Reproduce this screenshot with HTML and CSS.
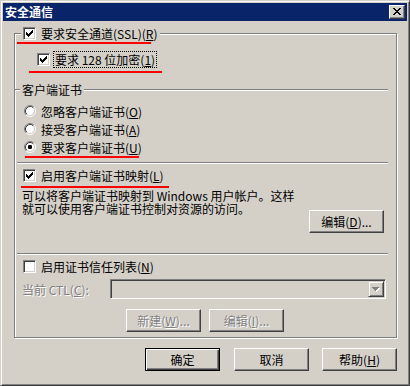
FILE: index.html
```
<!DOCTYPE html>
<html>
<head>
    <meta charset="UTF-8">
    <title>安全通信</title>
    <link rel="stylesheet" href="styles.css">
</head>
<body>

<div class="window">
    <div class="titlebar">
        <span class="title">安全通信</span>
        <span class="close-btn">
            <svg width="8" height="7" viewBox="0 0 8 7" shape-rendering="crispEdges"><path d="M0 0h2v1H0z M6 0h2v1H6z M1 1h2v1H1z M5 1h2v1H5z M2 2h4v1H2z M3 3h2v1H3z M2 4h4v1H2z M1 5h2v1H1z M5 5h2v1H5z M0 6h2v1H0z M6 6h2v1H6z" fill="#000"/></svg>
        </span>
    </div>

    <div class="dialog-body">
        <div class="group">
            <div class="legend">
                <span class="cb checked"></span>
                <span class="label">要求安全通道(SSL)(<u>R</u>)</span>
            </div>

            <div class="row row-128">
                <span class="cb checked"></span>
                <span class="label focus">要求 128 位加密(<u>1</u>)</span>
            </div>

            <div class="sep sep-titled"><span class="sep-label">客户端证书</span></div>

            <div class="radios">
                <div class="radio-row"><span class="radio"></span><span class="label">忽略客户端证书(<u>O</u>)</span></div>
                <div class="radio-row"><span class="radio"></span><span class="label">接受客户端证书(<u>A</u>)</span></div>
                <div class="radio-row"><span class="radio selected"></span><span class="label">要求客户端证书(<u>U</u>)</span></div>
            </div>

            <div class="sep"></div>

            <div class="row row-check">
                <span class="cb checked"></span>
                <span class="label">启用客户端证书映射(<u>L</u>)</span>
            </div>

            <div class="mapping">
                <p class="note">可以将客户端证书映射到 Windows 用户帐户。这样<br>就可以使用客户端证书控制对资源的访问。</p>
                <span class="btn btn-edit">编辑(<u>D</u>)...</span>
            </div>

            <div class="sep sep-ctl"></div>

            <div class="row row-check">
                <span class="cb"></span>
                <span class="label">启用证书信任列表(<u>N</u>)</span>
            </div>

            <div class="ctl-row">
                <span class="ctl-label disabled">当前 CTL(<u>C</u>):</span>
                <span class="combo">
                    <span class="combo-btn"></span>
                </span>
            </div>

            <div class="ctl-buttons">
                <span class="btn disabled">新建(<u>W</u>)...</span>
                <span class="btn disabled">编辑(<u>I</u>)...</span>
            </div>
        </div>

        <div class="dialog-buttons">
            <span class="btn default">确定</span>
            <span class="btn">取消</span>
            <span class="btn">帮助(<u>H</u>)</span>
        </div>
    </div>

    <!-- red marks drawn over the dialog -->
    <span class="mark" style="left:16px;top:41px;width:134px"></span>
    <span class="mark" style="left:28px;top:70px;width:133px"></span>
    <span class="mark" style="left:24px;top:155px;width:114px"></span>
    <span class="mark" style="left:20px;top:185px;width:148px"></span>
</div>

</body>
</html>
```

FILE: styles.css
```
*, *::after, *::before {
    box-sizing: border-box;
}

html, body {
    margin: 0;
    padding: 0;
    background-color: #d4d0c8;
    font-family: "Noto Sans CJK SC", sans-serif;
    font-size: 12px;
    color: #000;
}

u {
    text-decoration: underline;
    text-underline-offset: 1px;
}

.window {
    position: relative;
    width: 410px;
    height: 386px;
    padding: 2px;
    background: #d4d0c8;
    border: 1px solid;
    border-color: #d4d0c8 #404040 #404040 #d4d0c8;
    box-shadow: inset 1px 1px 0 #fff, inset -1px -1px 0 #808080;
}

.titlebar {
    display: flex;
    align-items: center;
    justify-content: space-between;
    height: 18px;
    padding: 0 2px;
    background: #0a246a;
}

.title {
    color: #fff;
    font-weight: bold;
    line-height: 14px;
}

.close-btn {
    display: flex;
    align-items: center;
    justify-content: center;
    width: 16px;
    height: 14px;
    background: #d4d0c8;
    border: 1px solid;
    border-color: #fff #404040 #404040 #fff;
    box-shadow: inset -1px -1px 0 #808080;
}

.close-btn svg {
    margin: 0 1px 1px 0;
}

.dialog-body {
    padding: 12px 10px 0 11px;
}

/* etched group frame */
.group {
    display: flex;
    flex-direction: column;
    align-items: flex-start;
    width: 383px;
    height: 305px;
    border: 1px solid #808080;
    box-shadow: 1px 1px 0 #fff, inset 1px 1px 0 #fff;
}

.legend {
    display: flex;
    align-items: center;
    height: 13px;
    margin: -7px 0 0 6px;
    padding: 0 2px;
    background: #d4d0c8;
}

.label {
    line-height: 13px;
    white-space: nowrap;
}

.legend .label,
.row-check .label,
.radio-row .label {
    margin-left: 5px;
}

.row {
    display: flex;
    align-items: center;
}

.row-128 {
    height: 17px;
    margin: 11px 0 0 22px;
}

.row-128 .label {
    margin-left: 3px;
    padding: 0 1px;
    line-height: 15px;
}

.focus {
    border: 1px dotted #000;
}

.row-check {
    height: 13px;
    margin: 5px 0 0 8px;
}

/* checkbox */
.cb {
    position: relative;
    flex: none;
    width: 13px;
    height: 13px;
    background: #fff;
    border: 1px solid;
    border-color: #808080 #fff #fff #808080;
    box-shadow: inset 1px 1px 0 #404040, inset -1px -1px 0 #d4d0c8;
}

.cb.checked::after {
    content: "";
    position: absolute;
    left: 2px;
    top: 2px;
    width: 7px;
    height: 7px;
    background: url("data:image/svg+xml;utf8,<svg xmlns='http://www.w3.org/2000/svg' width='7' height='7' shape-rendering='crispEdges'><path d='M6 0h1v1H6z M5 1h2v1H5z M0 2h1v1H0z M4 2h3v1H4z M0 3h2v1H0z M3 3h3v1H3z M0 4h5v1H0z M1 5h3v1H1z M2 6h1v1H2z' fill='black'/></svg>") no-repeat;
}

/* separators */
.sep {
    align-self: stretch;
    height: 2px;
    margin: 6px 8px 0 2px;
    border-top: 1px solid #808080;
    border-bottom: 1px solid #fff;
}

.sep-titled {
    display: flex;
    align-items: center;
    height: 12px;
    margin: 16px 8px 0 0;
    border: 0;
}

.sep-titled::before,
.sep-titled::after {
    content: "";
    height: 2px;
    border-top: 1px solid #808080;
    border-bottom: 1px solid #fff;
}

.sep-titled::before {
    width: 5px;
}

.sep-titled::after {
    flex: 1;
}

.sep-label {
    padding: 0 2px;
    line-height: 12px;
}

.sep-ctl {
    margin-top: 20px;
}

/* radio buttons */
.radios {
    margin: 6px 0 0 9px;
}

.radio-row {
    display: flex;
    align-items: center;
    height: 18px;
}

.radio {
    flex: none;
    width: 12px;
    height: 12px;
    background: url("data:image/svg+xml;utf8,<svg xmlns='http://www.w3.org/2000/svg' width='12' height='12'><circle cx='6' cy='6' r='4.5' fill='white'/><path d='M2.11 9.89A5.5 5.5 0 0 1 9.89 2.11' fill='none' stroke='%23808080'/><path d='M9.89 2.11A5.5 5.5 0 0 1 2.11 9.89' fill='none' stroke='white'/><path d='M2.82 9.18A4.5 4.5 0 0 1 9.18 2.82' fill='none' stroke='%23404040'/><path d='M9.18 2.82A4.5 4.5 0 0 1 2.82 9.18' fill='none' stroke='%23d4d0c8'/></svg>") no-repeat;
}

.radio.selected {
    background: url("data:image/svg+xml;utf8,<svg xmlns='http://www.w3.org/2000/svg' width='12' height='12'><circle cx='6' cy='6' r='4.5' fill='white'/><path d='M2.11 9.89A5.5 5.5 0 0 1 9.89 2.11' fill='none' stroke='%23808080'/><path d='M9.89 2.11A5.5 5.5 0 0 1 2.11 9.89' fill='none' stroke='white'/><path d='M2.82 9.18A4.5 4.5 0 0 1 9.18 2.82' fill='none' stroke='%23404040'/><path d='M9.18 2.82A4.5 4.5 0 0 1 2.82 9.18' fill='none' stroke='%23d4d0c8'/><rect x='4' y='4' width='4' height='4' rx='1.2' fill='black'/></svg>") no-repeat;
}

/* mapping text + edit button */
.mapping {
    display: flex;
    align-items: flex-start;
    align-self: stretch;
    margin: 7px 12px 0 7px;
}

.note {
    margin: 0;
    line-height: 13px;
    white-space: nowrap;
}

.btn-edit {
    margin: 21px 0 0 auto;
}

/* buttons */
.btn {
    display: flex;
    align-items: center;
    justify-content: center;
    flex: none;
    width: 75px;
    height: 23px;
    line-height: 13px;
    background: #d4d0c8;
    border: 1px solid;
    border-color: #fff #404040 #404040 #fff;
    box-shadow: inset -1px -1px 0 #808080;
    white-space: nowrap;
}

.btn.default {
    border-color: #000;
    box-shadow: inset 1px 1px 0 #fff, inset -1px -1px 0 #404040, inset -2px -2px 0 #808080;
}

.disabled {
    color: #808080;
    text-shadow: 1px 1px 0 #fff;
}

/* ctl row */
.ctl-row {
    display: flex;
    align-items: center;
    height: 20px;
    margin: 6px 0 0 7px;
}

.ctl-label {
    width: 88px;
    line-height: 13px;
    white-space: nowrap;
}

.combo {
    display: flex;
    justify-content: flex-end;
    width: 276px;
    height: 20px;
    padding: 1px;
    border: 1px solid;
    border-color: #808080 #fff #fff #808080;
    box-shadow: inset 1px 1px 0 #404040, inset -1px -1px 0 #d4d0c8;
}

.combo-btn {
    position: relative;
    width: 16px;
    height: 16px;
    border: 1px solid;
    border-color: #d4d0c8 #404040 #404040 #d4d0c8;
    box-shadow: inset 1px 1px 0 #fff, inset -1px -1px 0 #808080;
}

.combo-btn::after {
    content: "";
    position: absolute;
    left: 3px;
    top: 5px;
    width: 8px;
    height: 5px;
    background: url("data:image/svg+xml;utf8,<svg xmlns='http://www.w3.org/2000/svg' width='8' height='5' shape-rendering='crispEdges'><path d='M1 1h7v1H1z M2 2h5v1H2z M3 3h3v1H3z M4 4h1v1H4z' fill='white'/><path d='M0 0h7v1H0z M1 1h5v1H1z M2 2h3v1H2z M3 3h1v1H3z' fill='%23808080'/></svg>") no-repeat;
}

.ctl-buttons {
    display: flex;
    gap: 8px;
    margin: 10px 0 0 111px;
}

.dialog-buttons {
    display: flex;
    justify-content: flex-end;
    gap: 13px;
    margin-top: 10px;
}

.dialog-buttons .default {
    margin-right: 1px;
}

/* red annotation marks */
.mark {
    position: absolute;
    height: 2px;
    background: #f00;
}
```
